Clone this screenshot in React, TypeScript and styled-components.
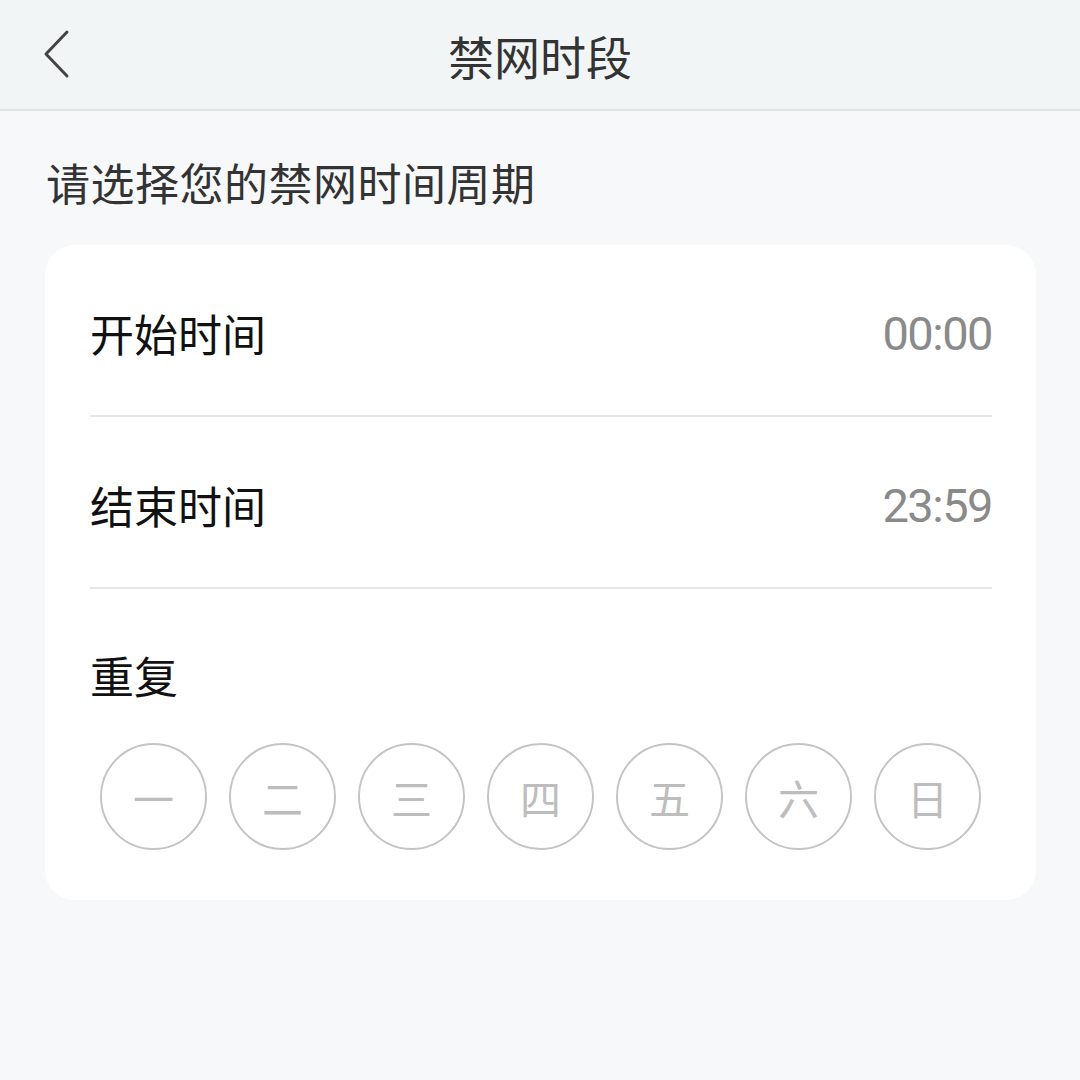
import React from "react";
import styled, { createGlobalStyle } from "styled-components";

const GlobalStyle = createGlobalStyle`
  html, body {
    margin: 0;
    padding: 0;
    background-color: #f7f8fa;
    font-family: "Noto Sans CJK SC", "Noto Sans", sans-serif;
  }
`;

const Page = styled.div`
  width: 1080px;
  height: 1080px;
  background-color: #f7f8fa;
  display: flex;
  flex-direction: column;
`;

const Header = styled.div`
  height: 111px;
  box-sizing: border-box;
  background-color: #f1f5f5;
  border-bottom: 2px solid #dfe3e3;
  display: flex;
  align-items: center;
  justify-content: center;
  position: relative;

  h1 {
    margin: 0;
    font-size: 46px;
    font-weight: 400;
    color: #333;
    line-height: 1;
  }
`;

const Back = styled.button`
  position: absolute;
  left: 36px;
  top: 26px;
  width: 40px;
  height: 56px;
  border: none;
  background: none;
  padding: 0;
  display: flex;
  align-items: center;
  justify-content: center;
`;

const Intro = styled.div`
  font-size: 44px;
  letter-spacing: 0.5px;
  color: #333;
  line-height: 56px;
  height: 134px;
  box-sizing: border-box;
  padding: 43px 0 0 46px;
`;

const Card = styled.div`
  margin: 0 44px 0 45px;
  background-color: #fff;
  border-radius: 30px;
  padding: 0 44px 0 45px;
  display: flex;
  flex-direction: column;
  height: 655px;
  box-sizing: border-box;
`;

const Row = styled.div`
  height: 172px;
  display: flex;
  align-items: center;
  justify-content: space-between;
  border-bottom: 2px solid #e6e6e6;
  padding-top: 6px;
  box-sizing: border-box;
`;

const Label = styled.span`
  font-size: 44px;
  color: #111;
`;

const Value = styled.span`
  font-family: Roboto, "Noto Sans", sans-serif;
  font-size: 47px;
  color: #8a8a8a;
  letter-spacing: -1.5px;
`;

const Repeat = styled.div`
  padding-top: 56px;
  font-size: 44px;
  color: #111;
  line-height: 60px;
`;

const Days = styled.div`
  display: flex;
  gap: 22px;
  padding: 0 10px;
  margin-top: 38px;
`;

const Day = styled.div`
  width: 107px;
  height: 107px;
  box-sizing: border-box;
  border: 2px solid #c4c4c4;
  border-radius: 50%;
  display: flex;
  align-items: center;
  justify-content: center;
  font-size: 41px;
  color: #bdbdbd;
`;

const days = ["一", "二", "三", "四", "五", "六", "日"];

const App: React.FC = () => {
  return (
    <Page>
      <GlobalStyle />
      <Header>
        <Back aria-label="返回">
          <svg width="30" height="52" viewBox="0 0 30 52" fill="none">
            <path d="M26 4 L5 26 L26 48" stroke="#444" strokeWidth="3" strokeLinecap="round" strokeLinejoin="round" />
          </svg>
        </Back>
        <h1>禁网时段</h1>
      </Header>
      <Intro>请选择您的禁网时间周期</Intro>
      <Card>
        <Row>
          <Label>开始时间</Label>
          <Value>00:00</Value>
        </Row>
        <Row>
          <Label>结束时间</Label>
          <Value>23:59</Value>
        </Row>
        <Repeat>重复</Repeat>
        <Days>
          {days.map((d) => (
            <Day key={d}>{d}</Day>
          ))}
        </Days>
      </Card>
    </Page>
  );
};

export default App;
